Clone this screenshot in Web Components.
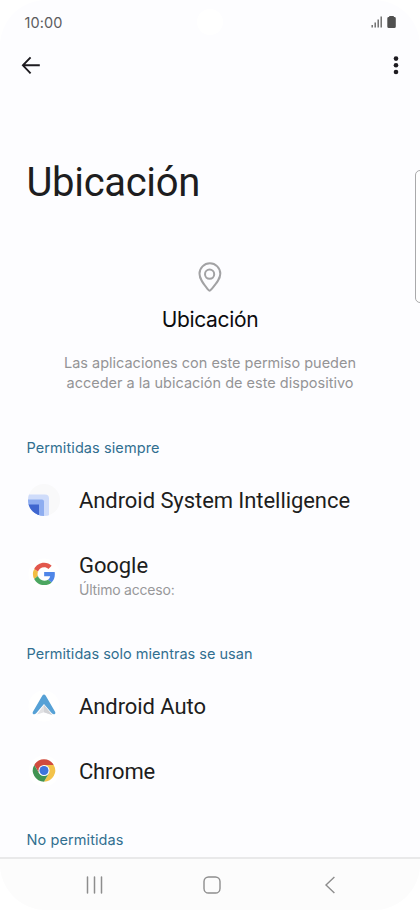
<!DOCTYPE html>
<html lang="es">
<head>
<meta charset="utf-8">
<title>Ubicación</title>
<style>
html,body{margin:0;background:#fff}
body{font-family:Roboto,"Liberation Sans",sans-serif}
</style>
</head>
<body>
<phone-screen>
  <status-bar slot="top" time="10:00"></status-bar>
  <app-bar slot="top"></app-bar>
  <page-title><fit-text width="173.5">Ubicación</fit-text></page-title>
  <permission-intro>
    <fit-text slot="name" width="96.5">Ubicación</fit-text>
    <fit-text slot="line" width="292">Las aplicaciones con este permiso pueden</fit-text>
    <fit-text slot="line" width="287">acceder a la ubicación de este dispositivo</fit-text>
  </permission-intro>
  <app-section style="height:206px">
    <fit-text slot="label" width="133">Permitidas siempre</fit-text>
    <app-row icon="intelligence"><fit-text width="271">Android System Intelligence</fit-text></app-row>
    <app-row icon="google" class="tall"><fit-text width="69">Google</fit-text><fit-text slot="sub" width="95.5">Último acceso:</fit-text></app-row>
  </app-section>
  <app-section style="height:186px">
    <fit-text slot="label" width="226">Permitidas solo mientras se usan</fit-text>
    <app-row icon="auto"><fit-text width="127">Android Auto</fit-text></app-row>
    <app-row icon="chrome"><fit-text width="76">Chrome</fit-text></app-row>
  </app-section>
  <app-section><fit-text slot="label" width="97">No permitidas</fit-text></app-section>
  <nav-bar slot="bottom"></nav-bar>
</phone-screen>
<script>
const define = (name, html, setup) => customElements.define(name, class extends HTMLElement {
  connectedCallback() {
    if (this.shadowRoot) return;
    this.attachShadow({mode: 'open'}).innerHTML = html;
    if (setup) setup(this, this.shadowRoot);
  }
});

define('phone-screen', `<style>
:host{display:flex;flex-direction:column;position:relative;width:420px;height:910px;overflow:hidden;background:#fdfdff;border-radius:46px}
main{flex:1;min-height:0;overflow:hidden}
.edge{position:absolute;right:-8px;top:170px;width:11px;height:131px;border:1px solid #a9a9ab;border-radius:5px;background:#fefefe}
.camera{position:absolute;left:197px;top:9px;width:26px;height:26px;border-radius:50%;background:#fff}
</style><div class="camera"></div><slot name="top"></slot><main><slot></slot></main><slot name="bottom"></slot><div class="edge"></div>`);

define('status-bar', `<style>
:host{display:flex;position:relative;height:44px;box-sizing:border-box;padding:0 23px 0 24.5px;align-items:center;justify-content:space-between;color:#5c5c5e;font:14.5px/20px Inter,Roboto,sans-serif}
svg{display:block}
fit-text{padding-top:2px}
</style><fit-text width="38"></fit-text>
<svg width="27" height="14" viewBox="370 15 27 14"><path d="M372.2 25v2.5M375.2 22.5v5M378.2 19.5v8M381.2 16.5v11" stroke="#666" stroke-width="1.4"/><path d="M389.2 16h4.6v1.1h.6q1.4 0 1.4 1.4v8q0 1.5-1.5 1.5h-5.5q-1.5 0-1.5-1.5v-8q0-1.4 1.4-1.4h.5z" fill="#505050"/></svg>`,
(el, root) => { root.querySelector('fit-text').textContent = el.getAttribute('time'); });

define('app-bar', `<style>
:host{display:flex;height:42px;box-sizing:border-box;padding:0 21px;align-items:center;justify-content:space-between}
svg{display:block}
</style><svg width="20" height="18" viewBox="0 0 20 18"><path d="M18.8 9.3H2M9.6 1.3L1.9 9.3l7.7 8" fill="none" stroke="#1d1b20" stroke-width="1.9"/></svg>
<svg width="6" height="20" viewBox="0 0 6 20" fill="#1d1b20"><circle cx="3" cy="3.6" r="2.3"/><circle cx="3" cy="10.3" r="2.3"/><circle cx="3" cy="17" r="2.3"/></svg>`);

define('page-title', `<style>
:host{display:block;padding:73px 26.5px 0;height:46px;font-size:40px;line-height:48px;color:#1d1d20}
</style><slot></slot>`);

define('permission-intro', `<style>
:host{display:flex;flex-direction:column;align-items:center;box-sizing:border-box;height:223px;padding-top:57px;font-family:Inter,Roboto,sans-serif;font-size:14.5px;line-height:20px;color:#949496}
svg{display:block;flex:none}
.name{height:28px;margin:14px 0 19px;font-size:21px;line-height:28px;color:#0c0c0e}
</style><svg width="26" height="30" viewBox="0 0 26 30" fill="none" stroke="#a2a2a4" stroke-width="2"><path d="M12.6 28.7Q12 28.7 11.2 27.7C6.5 21.8 2.5 17.2 2.5 11.7a10.4 10.4 0 0 1 20.8 0C23.3 17.2 18.8 22 14 27.7Q13.2 28.7 12.6 28.7Z"/><circle cx="12.6" cy="12.2" r="4.6"/></svg>
<div class="name"><slot name="name"></slot></div><slot name="line"></slot>`);

define('app-section', `<style>
:host{display:block}
header{height:40px;padding-left:26.5px;font-family:Inter,Roboto,sans-serif;font-size:14.5px;line-height:40px;color:#316f90}
</style><header><slot name="label"></slot></header><slot></slot>`);

const icons = {
  intelligence: `<defs><clipPath id="c"><circle cx="16" cy="16" r="16"/></clipPath></defs><circle cx="16" cy="16" r="16" fill="#f9f9fa"/><g clip-path="url(#c)"><path d="M0 10.5h17q4 0 4 4V32H0z" fill="#cfdcfa"/><path d="M0 15.5h14q2 0 2 2V32H0z" fill="#8eadf0"/><path d="M0 20.5h11V32H0z" fill="#3f66cf"/></g>`,
  google: `<circle cx="16" cy="16" r="15.5" fill="#fff"/><g transform="translate(5 4.8) scale(.465)"><path fill="#e2574c" d="M24 9.5c3.5 0 6.7 1.2 9.2 3.6l6.9-6.9C35.9 2.4 30.5 0 24 0 14.6 0 6.5 5.4 2.6 13.2l8 6.2C12.4 13.7 17.7 9.5 24 9.5z"/><path fill="#4f86e8" d="M47 24.6c0-1.6-.2-3.1-.4-4.6H24v9h12.9c-.6 3-2.3 5.5-4.7 7.2l7.7 6C44.4 38 47 32 47 24.6z"/><path fill="#f2bd42" d="M10.5 28.6a14.5 14.5 0 0 1 0-9.2l-8-6.2a24 24 0 0 0 0 21.6z"/><path fill="#4ba660" d="M24 48c6.5 0 11.9-2.1 15.9-5.8l-7.7-6c-2.2 1.5-4.9 2.3-8.2 2.3-6.3 0-11.6-4.2-13.5-9.9l-8 6.2C6.5 42.6 14.6 48 24 48z"/></g>`,
  auto: `<circle cx="16" cy="16" r="15.5" fill="#fff"/><g transform="translate(0 .9)"><path d="M16 14L9 23.5l7-2.2 7 2.4z" fill="#e2e2e4"/><path d="M16 14v7.3l8.5 3z" fill="#d2d3d6"/><path d="M14.4 4.6q1.6-1.8 3.2 0L27.2 21q.7 2.3-1.6 2.3-1.3 0-2-1.1L16 13.2 8.4 22.2q-.7 1.1-2 1.1-2.3 0-1.6-2.3z" fill="#56a1d6"/></g>`,
  chrome: `<circle cx="16" cy="16" r="15.5" fill="#fff"/><g transform="translate(16 15.5)"><path d="M-9.7-5.6A11.2 11.2 0 0 1 9.7-5.6H0L-4.9 2.8z" fill="#d04b3e"/><path d="M9.7-5.6A11.2 11.2 0 0 1 0 11.2L4.9 2.8 0-5.6z" fill="#f3c34a"/><path d="M0 11.2A11.2 11.2 0 0 1-9.7-5.6L-4.9 2.8H4.9z" fill="#419352"/><circle r="5.6" fill="#fff"/><circle r="4.5" fill="#3e74dc"/></g>`
};

define('app-row', `<style>
:host{display:flex;height:65px;padding-left:27.7px;gap:19.3px;align-items:center;color:#1d1d20}
:host(.tall){height:81px}
svg{display:block;flex:none;margin-bottom:2px}
:host(.tall) svg{margin-bottom:0}
.text{display:flex;flex-direction:column;font-size:22px;line-height:28px}
:host(.tall) .text{padding-top:4px}
.sub{font-family:Inter,Roboto,sans-serif;font-size:14px;line-height:20px;color:#98989a}
</style><svg width="32" height="32" viewBox="0 0 32 32"></svg><div class="text"><slot></slot><div class="sub"><slot name="sub"></slot></div></div>`,
(el, root) => {
  root.querySelector('svg').innerHTML = icons[el.getAttribute('icon')];
  if (!el.querySelector('[slot=sub]')) root.querySelector('.sub').remove();
});

define('nav-bar', `<style>
:host{display:flex;height:53px;box-sizing:border-box;border-top:2px solid #e9e9ea;background:#fcfcfc;align-items:center;padding:1px 84px 0 85px}
svg{display:block}
.home{margin:0 103px 0 100px}
</style><svg width="18" height="18" viewBox="0 0 18 18"><path d="M2.5 1v16M9.5 1v16M16.5 1v16" stroke="#8d8d8d" stroke-width="1.5" stroke-linecap="round"/></svg>
<svg class="home" width="18" height="18" viewBox="0 0 18 18"><rect x="1" y="1" width="16" height="16" rx="4.6" fill="none" stroke="#8d8d8d" stroke-width="1.4"/></svg>
<svg width="12" height="18" viewBox="0 0 12 18"><path d="M10.4 1L2 9l8.4 8" fill="none" stroke="#8d8d8d" stroke-width="1.4"/></svg>`);

/* One line of text, tracked so that it occupies the given width. */
define('fit-text', `<style>
:host{display:block;white-space:nowrap;width:max-content}
</style><slot></slot>`);
for (const root of [document, document.querySelector('status-bar').shadowRoot])
  for (const t of root.querySelectorAll('fit-text')) {
    const w = t.getBoundingClientRect().width;
    t.style.letterSpacing = ((+t.getAttribute('width') - w) / t.textContent.length) + 'px';
  }
</script>
</body>
</html>
